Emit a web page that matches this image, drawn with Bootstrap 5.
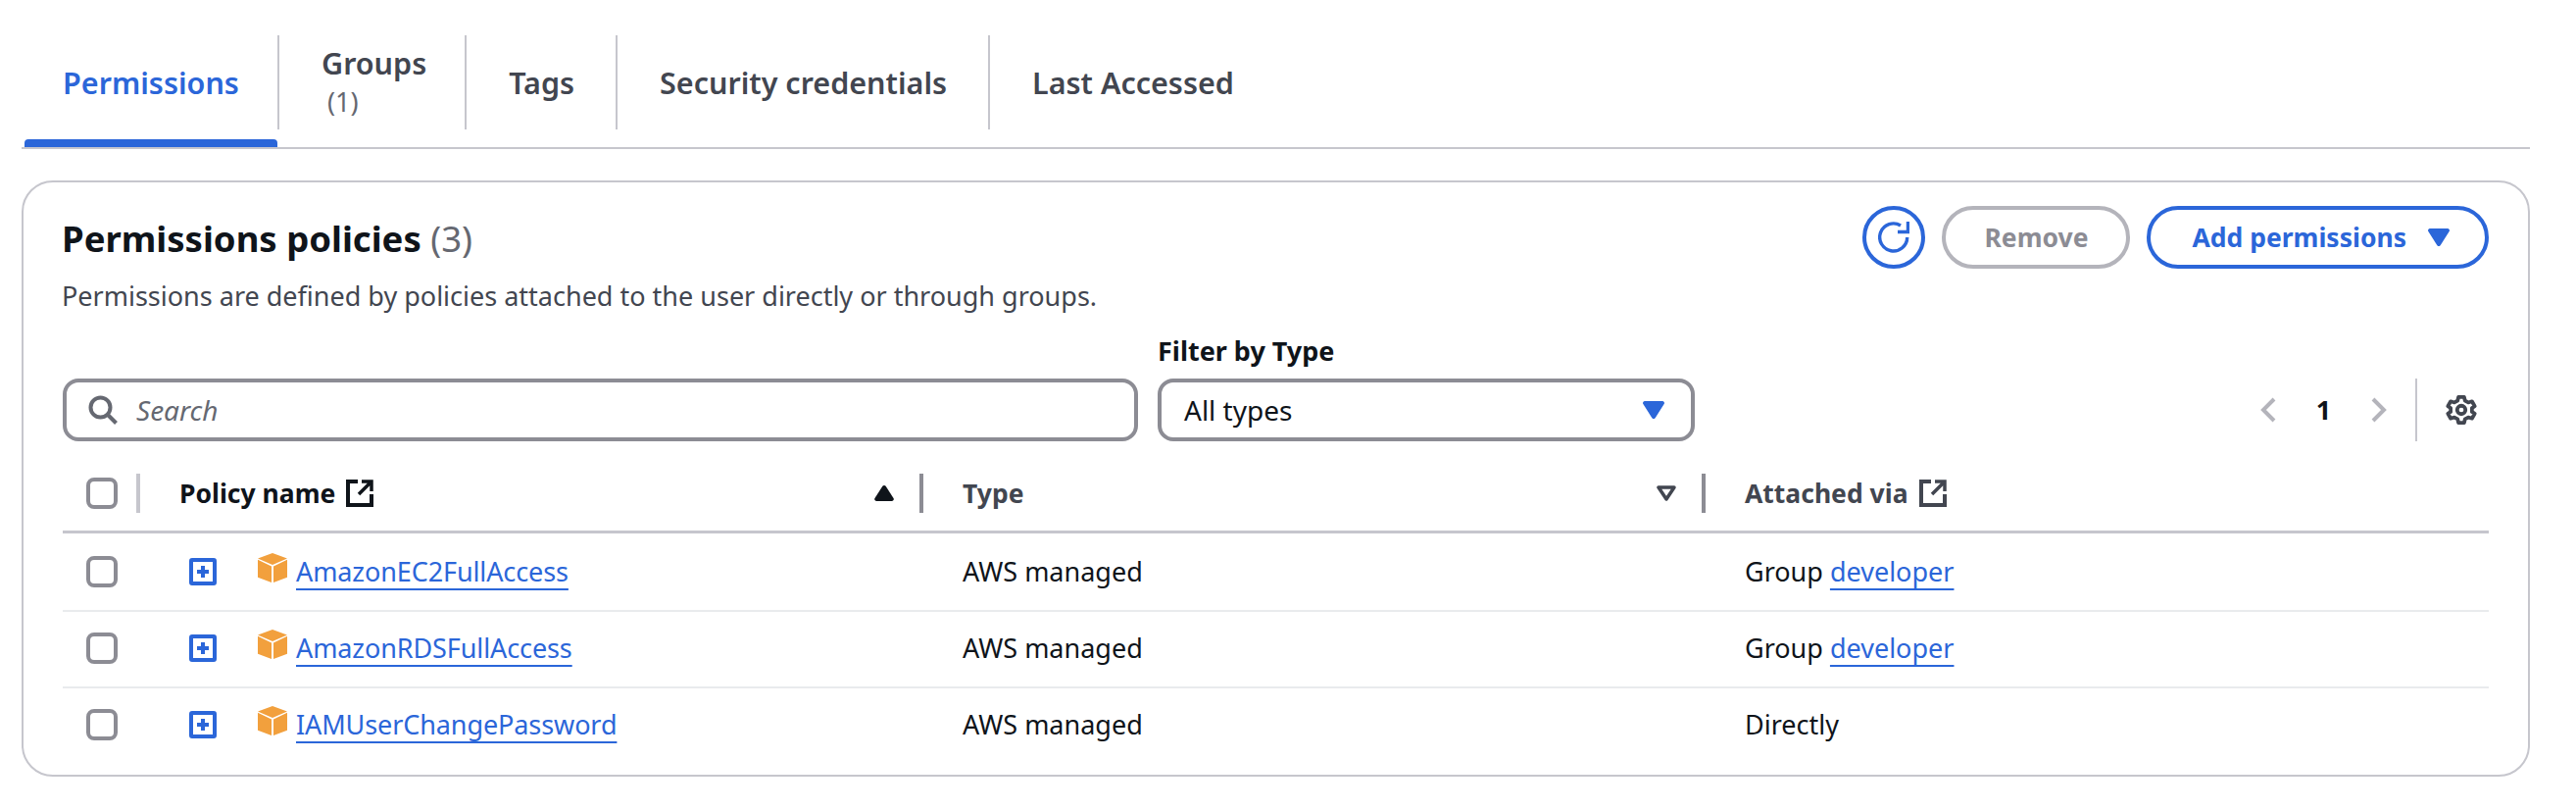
<!DOCTYPE html>
<html lang="en">
<head>
<meta charset="utf-8">
<title>Permissions</title>
<link href="https://cdn.jsdelivr.net/npm/bootstrap@5.3.0/dist/css/bootstrap.min.css" rel="stylesheet">
<style>
html,body{background:#fff;margin:0;height:826px;overflow:hidden}
body{font-family:"Noto Sans","Open Sans",sans-serif;font-size:27px;line-height:40px;color:#0f141a;padding:36px 47px 0 22px}
svg{display:block;flex:none}
.tabbar{height:116px;border-bottom:2px solid #c6c6cd;margin-bottom:32px;align-items:flex-start}
.tabx{height:96px;padding:0 42px 0 43px;border-left:2px solid #c6c6cd;font-weight:600;color:#424650;font-size:30.500px;display:flex;flex-direction:column;justify-content:center;line-height:40px;white-space:nowrap}
.tabx.grp{padding-left:43px;padding-right:39px}
.tabx.cur{border-left:0;padding:0;width:258px;margin-left:3px;color:#2b66d9;text-align:center;position:relative;height:114px;padding-bottom:18px}
.tabx.cur::after{content:"";position:absolute;left:0;right:0;bottom:0;height:8px;background:#2b66d9;border-radius:4px 4px 0 0}
.tabx small{font-weight:400;font-size:27px;line-height:40px;color:#656871;margin-left:6px}
.pane{border:2px solid #c6c6cd;border-radius:32px;width:2559px;height:608px;padding:24px 40px 0 40px}
.panehead{height:132px}
.panetitle{font-size:36.500px;line-height:48px;font-weight:700;margin:9px 0 0 -1px}
.panetitle span{font-weight:400;color:#656871}
.panedesc{font-size:27px;line-height:32px;color:#424650;margin:19px 0 0 -1px}
.headbtns{gap:17px}
.pillbtn.btn{height:64px;border:4px solid #2b66d9;border-radius:32px;color:#2b66d9;background:#fff;font-weight:700;font-size:26.500px;line-height:1;padding:0 36px 0 42px;display:flex;align-items:center;white-space:nowrap}
.pillbtn.btn.off{border-color:#b4b4bb;color:#8c8c94;padding:0 39px}
.pillbtn.btn.round{width:64px;padding:0;justify-content:center}
.tridown{margin-left:22px}
.filters{align-items:flex-end}
.lbl{font-size:27px;line-height:32px;font-weight:700;margin-bottom:12px}
.boxinput{height:64px;border:4px solid #8c8c94;border-radius:16px;display:flex;align-items:center;background:#fff}
.searchwrap{width:1097px;margin-right:20px}
.searchwrap .boxinput{padding:0 20px 0 22px;gap:19px;font-style:italic;color:#656871;font-size:28px}
.typewrap{width:548px}
.typewrap .boxinput{padding:0 27px 0 23px;justify-content:space-between;font-size:28px}
.pager{height:64px;margin-right:11px}
.pagenum{font-weight:700;font-size:27px;width:97px;text-align:center}
.vsep{width:2px;height:64px;background:#c6c6cd;margin:0 28px 0 29px}
.ptable{display:grid;grid-template-columns:79px 799px 798px 1fr;margin-top:14px;font-size:27px;width:2475px}
.hcell{height:80px;border-bottom:3px solid #c6c6cd;display:flex;align-items:center;font-weight:700;font-size:26.500px;padding-left:40px}
.hcell.first{padding-left:0}
.hcell.g{color:#424650}
.hsep{display:block;width:4px;height:40px;background:#8c8c94;margin-left:26px}
.hsep.lite{background:#c6c6cd;margin-left:auto}
.extlink{margin-left:11px}
.sorter{margin-left:auto}
.bcell{border-bottom:2px solid #e9ebed;display:flex;align-items:center;color:#0f141a;padding-left:40px}
.bcell.first,.bcell.name{padding-left:0}
.r1{height:80px}
.r2{height:78px;padding-bottom:2px}
.r3{height:74px;border-bottom:0}
.cbx{width:32px;height:32px;border:4px solid #8c8c94;border-radius:8px;margin-left:24px;background:#fff}
.plink{color:#2b66d9;text-decoration:underline;text-decoration-thickness:2px;text-underline-offset:7px;white-space:nowrap}
.expander{margin-left:50px}
.cube{margin:-8px 0 0 42px}
.name .plink{margin-left:9px;letter-spacing:-.1px}
</style>
</head>
<body>
<div class="d-flex tabbar">
  <div class="tabx cur">Permissions</div>
  <div class="tabx grp"><span>Groups</span><small>(1)</small></div>
  <div class="tabx">Tags</div>
  <div class="tabx">Security credentials</div>
  <div class="tabx">Last Accessed</div>
</div>
<div class="pane">
  <div class="d-flex justify-content-between panehead">
    <div>
      <h2 class="panetitle">Permissions policies <span>(3)</span></h2>
      <p class="panedesc">Permissions are defined by policies attached to the user directly or through groups.</p>
    </div>
    <div class="d-flex align-items-start headbtns">
      <button class="btn pillbtn round" type="button" aria-label="Refresh"><svg width="32" height="32" viewBox="0 0 32 32" fill="none" stroke="#2b66d9" stroke-width="3.400"><path d="M23 4A14 14 0 1 0 29.700 16"/><path d="M30.500 0v10.500H20"/></svg></button>
      <button class="btn pillbtn off" type="button">Remove</button>
      <button class="btn pillbtn" type="button">Add permissions<svg class="tridown" width="22" height="18" viewBox="0 0 22 18"><path d="M2 0h18a2 2 0 0 1 1.800 2.800L12.800 17a2 2 0 0 1-3.600 0L.2 2.800A2 2 0 0 1 2 0z" fill="#2b66d9"/></svg></button>
    </div>
  </div>
  <div class="d-flex filters">
    <div class="searchwrap"><div class="boxinput"><svg width="30" height="30" viewBox="0 0 30 30" fill="none" stroke="#656871" stroke-width="4"><circle cx="12.500" cy="12.500" r="10"/><path d="M19.500 19.500L28.500 28.500"/></svg>Search</div></div>
    <div class="typewrap"><div class="lbl">Filter by Type</div><div class="boxinput">All types <svg width="22" height="18" viewBox="0 0 22 18"><path d="M2 0h18a2 2 0 0 1 1.800 2.800L12.800 17a2 2 0 0 1-3.600 0L.2 2.800A2 2 0 0 1 2 0z" fill="#2b66d9"/></svg></div></div>
    <div class="d-flex align-items-center pager ms-auto">
      <svg width="16" height="26" viewBox="0 0 16 26" fill="none" stroke="#b4b4bb" stroke-width="4"><path d="M14 2L3 13l11 11"/></svg>
      <div class="pagenum">1</div>
      <svg width="16" height="26" viewBox="0 0 16 26" fill="none" stroke="#b4b4bb" stroke-width="4"><path d="M2 2l11 11L2 24"/></svg>
      <div class="vsep"></div>
      <svg width="34" height="34" viewBox="-2 -2 36 36" fill="none" stroke="#424650" stroke-width="4" stroke-linejoin="round"><path d="M13 2h6l1 4 3.500 2 4-1.200 3 5.200-3 2v4l3 2-3 5.200-4-1.200-3.500 2-1 4h-6l-1-4-3.500-2-4 1.200-3-5.200 3-2v-4l-3-2 3-5.200 4 1.200 3.500-2z"/><circle cx="16" cy="16" r="4.500"/></svg>
    </div>
  </div>
  <div class="ptable">
    <div class="hcell first"><div class="cbx"></div><i class="hsep lite"></i></div>
    <div class="hcell">Policy name <svg class="extlink" width="28" height="28" viewBox="0 0 28 28" fill="none" stroke="#0f141a" stroke-width="4"><path d="M12 2H2v24h24V15"/><path d="M16 2h10v10M26 2L13 15" stroke-width="3.500"/></svg><svg class="sorter" width="20" height="16" viewBox="0 0 20 16"><path d="M10 0c.8 0 1.400.4 1.800 1L19.500 13c.8 1.300 0 3-1.700 3H2.200C.5 16-.3 14.300.5 13L8.200 1c.4-.6 1-1 1.800-1z" fill="#0f141a"/></svg><i class="hsep"></i></div>
    <div class="hcell g">Type <svg class="sorter" width="20" height="16" viewBox="0 0 20 16" fill="none" stroke="#424650" stroke-width="3.500" stroke-linejoin="round"><path d="M2 2h16L10 14z"/></svg><i class="hsep"></i></div>
    <div class="hcell g">Attached via <svg class="extlink" width="28" height="28" viewBox="0 0 28 28" fill="none" stroke="#424650" stroke-width="4"><path d="M12 2H2v24h24V15"/><path d="M16 2h10v10M26 2L13 15" stroke-width="3.500"/></svg></div>

    <div class="bcell first r1"><div class="cbx"></div></div>
    <div class="bcell name r1">
      <svg class="expander" width="28" height="28" viewBox="0 0 28 28"><rect x="2" y="2" width="24" height="24" rx="1" fill="none" stroke="#2b66d9" stroke-width="4"/><path d="M14 8v12M8 14h12" stroke="#2b66d9" stroke-width="4"/></svg>
      <svg class="cube" width="30" height="30" viewBox="0 0 30 30"><path d="M15 0l15 5.500L15 12 0 5.500zM0 6.800L14 13.500V30L0 24.800zM30 6.800L16 13.500V30L30 24.800z" fill="#f2a03d"/></svg>
      <a class="plink" href="#">AmazonEC2FullAccess</a></div>
    <div class="bcell r1">AWS managed</div>
    <div class="bcell r1">Group&nbsp;<a class="plink" href="#">developer</a></div>

    <div class="bcell first r2"><div class="cbx"></div></div>
    <div class="bcell name r2">
      <svg class="expander" width="28" height="28" viewBox="0 0 28 28"><rect x="2" y="2" width="24" height="24" rx="1" fill="none" stroke="#2b66d9" stroke-width="4"/><path d="M14 8v12M8 14h12" stroke="#2b66d9" stroke-width="4"/></svg>
      <svg class="cube" width="30" height="30" viewBox="0 0 30 30"><path d="M15 0l15 5.500L15 12 0 5.500zM0 6.800L14 13.500V30L0 24.800zM30 6.800L16 13.500V30L30 24.800z" fill="#f2a03d"/></svg>
      <a class="plink" href="#">AmazonRDSFullAccess</a></div>
    <div class="bcell r2">AWS managed</div>
    <div class="bcell r2">Group&nbsp;<a class="plink" href="#">developer</a></div>

    <div class="bcell first r3"><div class="cbx"></div></div>
    <div class="bcell name r3">
      <svg class="expander" width="28" height="28" viewBox="0 0 28 28"><rect x="2" y="2" width="24" height="24" rx="1" fill="none" stroke="#2b66d9" stroke-width="4"/><path d="M14 8v12M8 14h12" stroke="#2b66d9" stroke-width="4"/></svg>
      <svg class="cube" width="30" height="30" viewBox="0 0 30 30"><path d="M15 0l15 5.500L15 12 0 5.500zM0 6.800L14 13.500V30L0 24.800zM30 6.800L16 13.500V30L30 24.800z" fill="#f2a03d"/></svg>
      <a class="plink" href="#">IAMUserChangePassword</a></div>
    <div class="bcell r3">AWS managed</div>
    <div class="bcell r3">Directly</div>
  </div>
</div>
<script src="https://cdn.jsdelivr.net/npm/bootstrap@5.3.0/dist/js/bootstrap.bundle.min.js"></script>
</body>
</html>
